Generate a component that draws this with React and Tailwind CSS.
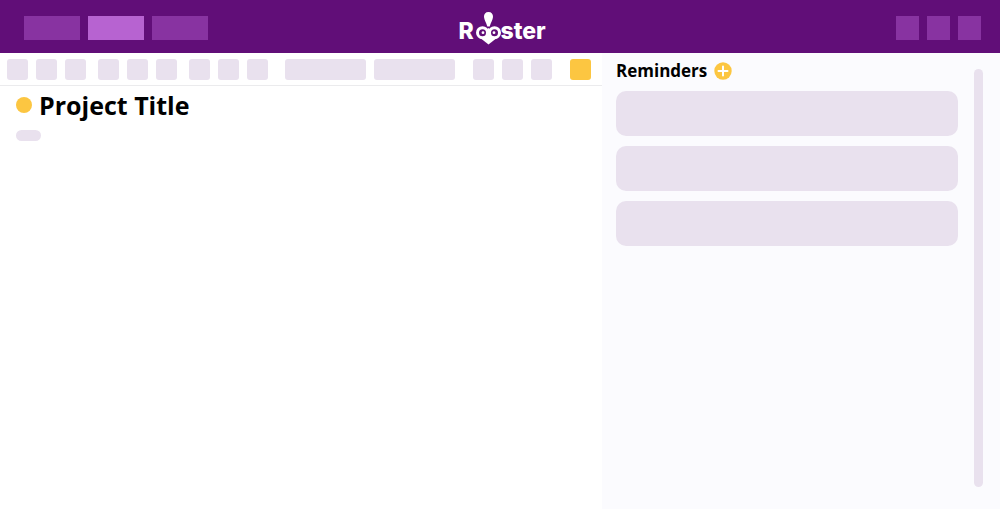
import React from 'react';

const tabs = [
  { label: 'Notes', active: false },
  { label: 'Projects', active: true },
  { label: 'Calendar', active: false },
];
const toolGroups = [
  ['Bold', 'Italic', 'Underline'],
  ['Align left', 'Align center', 'Align right'],
  ['Bullets', 'Numbering', 'Checklist'],
];

function Logo() {
  return (
    <svg viewBox="0 0 91 38" className="h-[38px] w-[91px]" role="img" aria-label="Rooster">
      <path d="M31.5 3C28.5 3 26.8 5 27 8C27.3 11 29.2 13.5 30.3 17.5H32.7C33.8 13.5 35.7 11 36 8C36.2 5 34.5 3 31.5 3Z" fill="#fff" />
      <g fill="#fff" className="font-['Inter',sans-serif] text-[23px] font-extrabold">
        <text x="1.5" y="30">R</text>
        <text x="43.5" y="30">ster</text>
      </g>
      <path d="M22 28L31.5 35.5L41 28L31.5 19Z" fill="#fff" />
      <circle cx="25.5" cy="23.7" r="5" fill="#610e78" stroke="#fff" strokeWidth="3" />
      <circle cx="37.5" cy="23.7" r="5" fill="#610e78" stroke="#fff" strokeWidth="3" />
      <circle cx="26" cy="23.7" r="1.4" fill="#fff" />
      <circle cx="37" cy="23.7" r="1.4" fill="#fff" />
    </svg>
  );
}

function Tool({ label }) {
  return <button type="button" aria-label={label} className="size-[21px] rounded-[3px] bg-[#e9e1ee]" />;
}

export default function App() {
  return (
    <div className="flex min-h-screen flex-col bg-white font-['Open_Sans','Noto_Sans',sans-serif] text-black">
      <header className="grid h-[53px] grid-cols-[1fr_auto_1fr] items-center bg-[#610e78] pt-[3px] pr-[19px] pl-6">
        <nav className="flex gap-2">
          {tabs.map((t) => (
            <button
              key={t.label}
              type="button"
              aria-label={t.label}
              className={t.active ? 'h-6 w-14 bg-[#b763d1]' : 'h-6 w-14 bg-[#8833a1]'}
            />
          ))}
        </nav>
        <Logo />
        <div className="flex justify-end gap-2">
          {['Search', 'Settings', 'Account'].map((l) => (
            <button key={l} type="button" aria-label={l} className="h-6 w-[23px] bg-[#8833a1]" />
          ))}
        </div>
      </header>
      <div className="flex flex-1">
        <main className="min-w-0 flex-1">
          <div className="flex h-[33px] items-center gap-3 border-b border-[#ebebed] px-[7px] pr-[11px]">
            {toolGroups.map((g) => (
              <div key={g[0]} className="flex gap-2">
                {g.map((l) => <Tool key={l} label={l} />)}
              </div>
            ))}
            <div className="ml-[5px] flex gap-2">
              <button type="button" aria-label="Font" className="h-[21px] w-[81px] rounded-[3px] bg-[#e9e1ee]" />
              <button type="button" aria-label="Text size" className="h-[21px] w-[81px] rounded-[3px] bg-[#e9e1ee]" />
            </div>
            <div className="ml-[6px] flex gap-2">
              {['Link', 'Image', 'Attachment'].map((l) => <Tool key={l} label={l} />)}
            </div>
            <button type="button" aria-label="Save" className="ml-auto size-[21px] rounded-[3px] bg-[#fcc641]" />
          </div>
          <div className="flex items-center gap-[7px] px-4 pt-[3px]">
            <span className="size-4 rounded-full bg-[#fcc641]" />
            <h1 className="text-[25px] leading-8 font-bold">Project Title</h1>
          </div>
          <div className="mx-4 mt-[9px] h-[11px] w-[25px] rounded-full bg-[#e9e1ee]" />
        </main>
        <aside className="flex w-[39.8%] gap-4 bg-[#fbfbfe] pr-[17px] pl-[14px]">
          <section className="flex-1 pt-[6px]">
            <div className="flex items-center gap-[7px]">
              <h2 className="text-[17px] leading-6 font-bold">Reminders</h2>
              <button type="button" aria-label="Add reminder" className="size-[18px]">
                <svg viewBox="0 0 18 18" className="size-full">
                  <circle cx="9" cy="9" r="8.7" fill="#fcc641" />
                  <path d="M9 4.5V13.5M4.5 9H13.5" stroke="#fff" strokeWidth="2" strokeLinecap="round" />
                </svg>
              </button>
            </div>
            <ul className="mt-2 flex flex-col gap-[10px]">
              {[1, 2, 3].map((n) => (
                <li key={n} className="h-[45px] rounded-[10px] bg-[#e9e1ee]" />
              ))}
            </ul>
          </section>
          <div className="mt-4 mb-[22px] w-[9px] rounded-full bg-[#e9e1ee]" />
        </aside>
      </div>
    </div>
  );
}
